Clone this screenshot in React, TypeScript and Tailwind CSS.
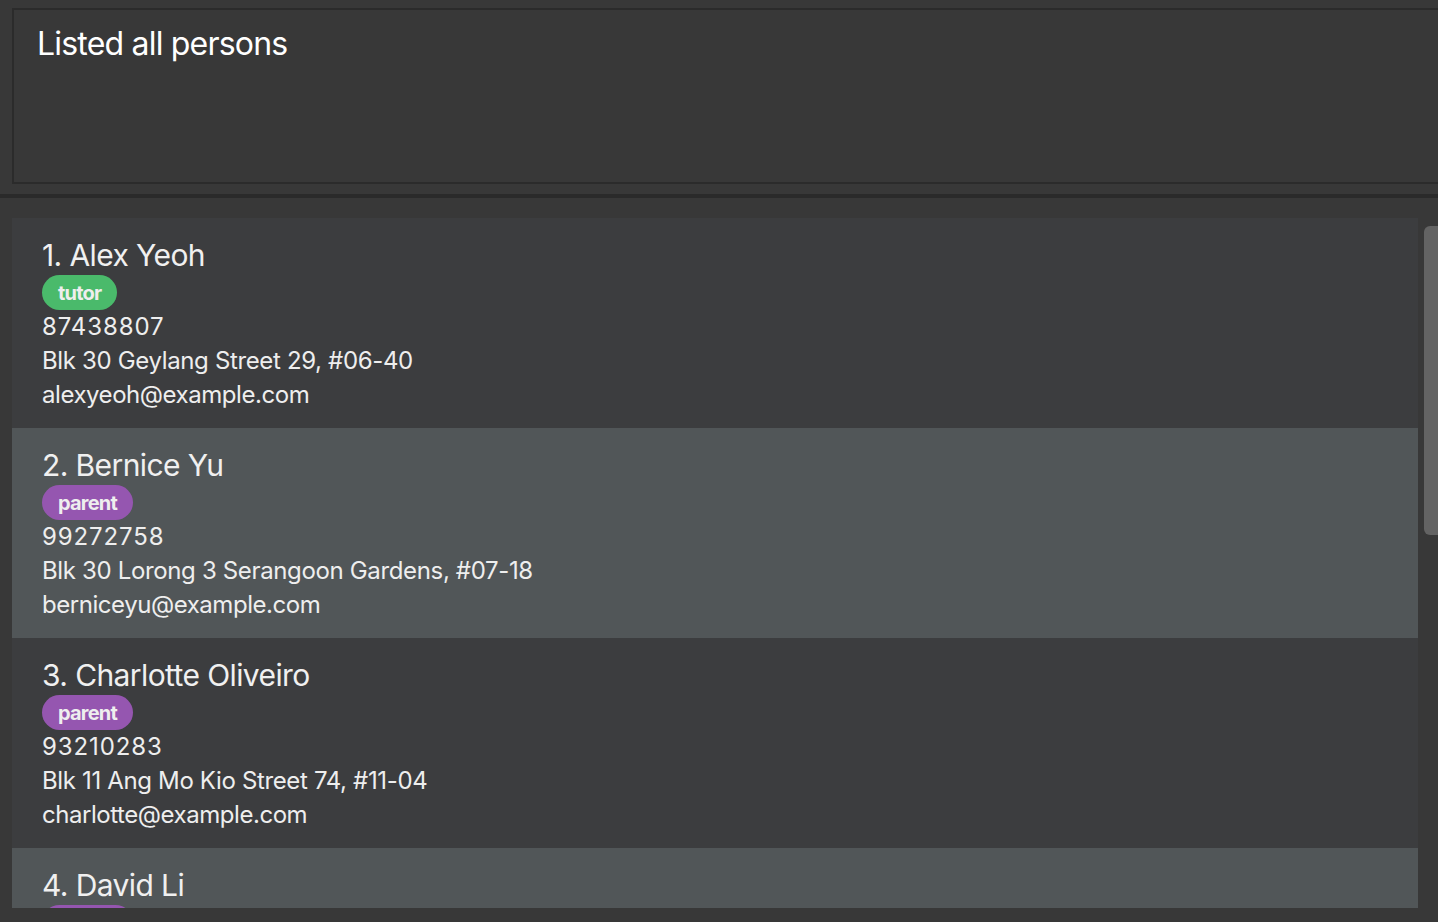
import React from "react";

const persons = [
  { name: "Alex Yeoh", tag: "tutor", phone: "87438807", address: "Blk 30 Geylang Street 29, #06-40", email: "alexyeoh@example.com" },
  { name: "Bernice Yu", tag: "parent", phone: "99272758", address: "Blk 30 Lorong 3 Serangoon Gardens, #07-18", email: "berniceyu@example.com" },
  { name: "Charlotte Oliveiro", tag: "parent", phone: "93210283", address: "Blk 11 Ang Mo Kio Street 74, #11-04", email: "charlotte@example.com" },
  { name: "David Li", tag: "parent", phone: "91031282", address: "Blk 436 Serangoon Gardens Street 26, #16-43", email: "lidavid@example.com" },
];

export default function App() {
  return (
    <div
      className="w-[1438px] h-[922px] bg-[#383838] overflow-hidden flex flex-col text-white"
      style={{ fontFamily: "Inter, 'Noto Sans', sans-serif" }}
    >
      <div className="pt-[8px] pl-[12px] h-[194px]">
        <div className="h-[176px] w-[1440px] border-2 border-[#2b2b2b] bg-[#383838] pl-[23px] pt-[12px]">
          <div className="text-[32px] leading-[44px] tracking-[-0.8px] text-white">Listed all persons</div>
        </div>
      </div>
      <div className="h-[4px] bg-[#2a2a2a]" />
      <div className="flex flex-1 pt-[20px] pl-[12px] pb-[14px] min-h-0">
        <div className="w-[1406px] shrink-0 h-[690px] overflow-hidden flex flex-col">
          {persons.map((p, i) => (
            <div
              key={p.name}
              className={`h-[210px] shrink-0 pl-[30px] pt-[19px] ${i % 2 === 0 ? "bg-[#3c3d3f]" : "bg-[#515658]"}`}
            >
              <div className="text-[30px] leading-[36px] tracking-[-0.6px] text-[#f0f0f0]">
                {i + 1}. {p.name}
              </div>
              <div className="mt-[2px] flex">
                <span
                  className={`h-[35px] flex items-center rounded-full px-[16px] text-[20px] font-bold tracking-[-0.8px] text-[#eeeeee] ${p.tag === "tutor" ? "bg-[#4aba6b]" : "bg-[#9556b0]"}`}
                >
                  {p.tag}
                </span>
              </div>
              <div className="text-[24px] leading-[34px] tracking-[0.9px] text-[#eeeeee]">{p.phone}</div>
              <div className="text-[24px] leading-[34px] tracking-[-0.35px] text-[#eeeeee]">{p.address}</div>
              <div className="text-[24px] leading-[34px] tracking-[-0.45px] text-[#eeeeee]">{p.email}</div>
            </div>
          ))}
        </div>
        <div className="ml-[6px] pt-[8px] shrink-0">
          <div className="w-[16px] h-[309px] bg-[#636363] rounded-l-[6px]" />
        </div>
      </div>
    </div>
  );
}
